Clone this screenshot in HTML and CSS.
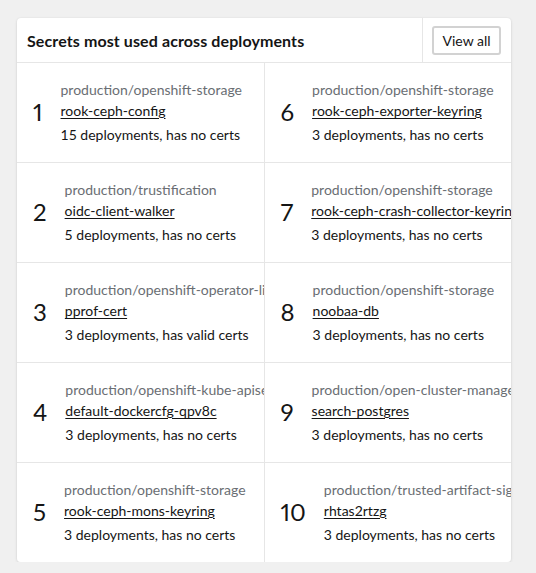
FILE: index.html
```html
<!DOCTYPE html>
<html lang="en">
<head>
<meta charset="utf-8">
<title>Secrets most used across deployments</title>
<link rel="stylesheet" href="styles.css">
</head>
<body>
<div class="card">
  <div class="card-header">
    <h2 class="card-title">Secrets most used across deployments</h2>
    <div class="card-actions"><button class="btn" type="button">View all</button></div>
  </div>
  <div class="grid">
    <div class="cell"><span class="num n1">1</span><div class="info"><div class="ns">production/openshift-storage</div><a class="link" href="#">rook-ceph-config</a><div class="desc">15 deployments, has no certs</div></div></div>
    <div class="cell"><span class="num">2</span><div class="info"><div class="ns">production/trustification</div><a class="link" href="#">oidc-client-walker</a><div class="desc">5 deployments, has no certs</div></div></div>
    <div class="cell"><span class="num">3</span><div class="info"><div class="ns">production/openshift-operator-lifecycle-manager</div><a class="link" href="#">pprof-cert</a><div class="desc">3 deployments, has valid certs</div></div></div>
    <div class="cell"><span class="num">4</span><div class="info"><div class="ns">production/openshift-kube-apiserver</div><a class="link" href="#">default-dockercfg-qpv8c</a><div class="desc">3 deployments, has no certs</div></div></div>
    <div class="cell"><span class="num">5</span><div class="info"><div class="ns">production/openshift-storage</div><a class="link" href="#">rook-ceph-mons-keyring</a><div class="desc">3 deployments, has no certs</div></div></div>
    <div class="cell"><span class="num">6</span><div class="info"><div class="ns">production/openshift-storage</div><a class="link" href="#">rook-ceph-exporter-keyring</a><div class="desc">3 deployments, has no certs</div></div></div>
    <div class="cell"><span class="num">7</span><div class="info"><div class="ns">production/openshift-storage</div><a class="link" href="#">rook-ceph-crash-collector-keyring</a><div class="desc">3 deployments, has no certs</div></div></div>
    <div class="cell"><span class="num">8</span><div class="info"><div class="ns">production/openshift-storage</div><a class="link" href="#">noobaa-db</a><div class="desc">3 deployments, has no certs</div></div></div>
    <div class="cell"><span class="num">9</span><div class="info"><div class="ns">production/open-cluster-management</div><a class="link" href="#">search-postgres</a><div class="desc">3 deployments, has no certs</div></div></div>
    <div class="cell"><span class="num">10</span><div class="info"><div class="ns">production/trusted-artifact-signer</div><a class="link" href="#">rhtas2rtzg</a><div class="desc">3 deployments, has no certs</div></div></div>
  </div>
</div>
</body>
</html>
```
FILE: styles.css
```css
* { box-sizing: border-box; }
html, body { margin: 0; padding: 0; }
body {
  background: #f0f0f0;
  font-family: Lato, "Open Sans", sans-serif;
  color: #151515;
  padding: 18px 25px 0 17px;
}
.card {
  width: 494px;
  background: #fff;
  border-radius: 4px;
  box-shadow: 0 1px 3px rgba(3, 3, 3, 0.12), 0 0 2px rgba(3, 3, 3, 0.06);
  overflow: hidden;
}
.card-header {
  display: flex;
  align-items: stretch;
  height: 45px;
  border-bottom: 1px solid #e6e6e6;
}
.card-title {
  flex: 1;
  margin: 0;
  padding-left: 10px;
  display: flex;
  align-items: center;
  font-size: 16px;
  font-weight: 700;
  letter-spacing: 0.1px;
}
.card-actions {
  border-left: 1px solid #e6e6e6;
  display: flex;
  align-items: center;
  padding: 0 10px 0 9px;
}
.btn {
  font-family: inherit;
  font-size: 14px;
  color: #151515;
  background: #fff;
  border: 2px solid #d2d2d2;
  border-radius: 3px;
  height: 29px;
  width: 69px;
  padding: 0;
}
.grid {
  display: grid;
  grid-template-columns: 1fr 1fr;
  grid-template-rows: repeat(5, 99px);
  grid-auto-flow: column;
  row-gap: 1px;
  column-gap: 1px;
  background: #e6e6e6;
}
.cell {
  background: #fff;
  display: flex;
  align-items: center;
  gap: 18px;
  padding: 0 0 1px 16px;
  overflow: hidden;
  white-space: nowrap;
}
.num {
  flex-shrink: 0;
  font-size: 24px;
  font-weight: 400;
  line-height: 1;
  font-variant-numeric: proportional-nums;
}
.info {
  font-size: 14px;
  line-height: 21px;
  display: flex;
  flex-direction: column;
  align-items: flex-start;
}
.ns { color: #6a6e73; }
.link { color: #151515; text-decoration: underline; text-underline-offset: 2px; }
.desc { margin-top: 3px; }
```
